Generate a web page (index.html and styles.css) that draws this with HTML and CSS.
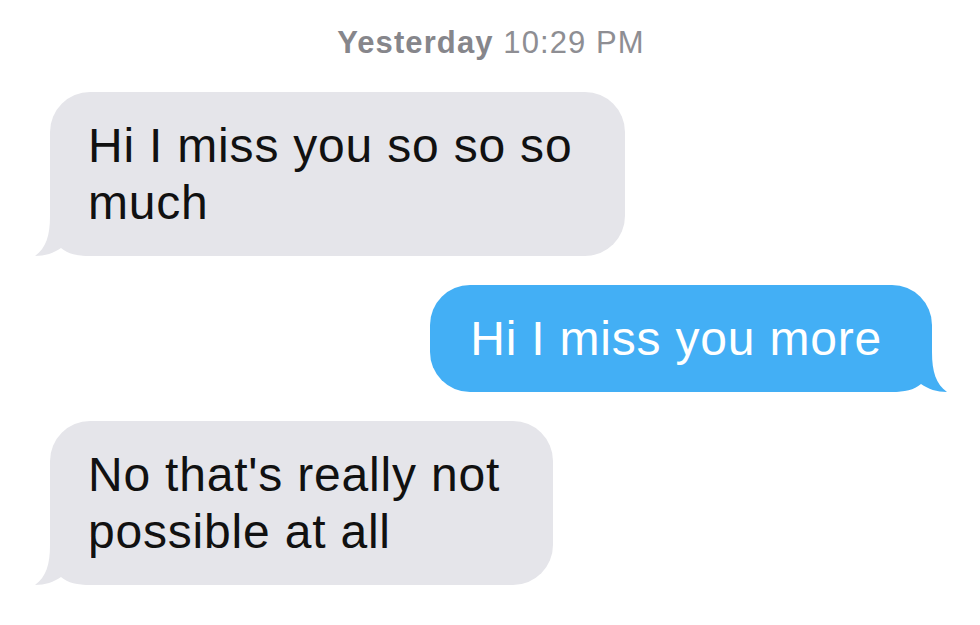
FILE: index.html
```html
<!DOCTYPE html>
<html lang="en">
<head>
<meta charset="UTF-8" />
<meta name="viewport" content="width=device-width, initial-scale=1" />
<title>Messages</title>
<link rel="stylesheet" href="styles.css">
</head>
<body>

<div class="thread">
  <div class="stamp"><strong>Yesterday</strong> 10:29 PM</div>

  <div class="bubble them">
    Hi I miss you so so so<br />much
    <svg class="tail" width="56" height="48" viewBox="0 0 56 48"><path d="M15,0 L15,8 C15,28 11,40 0,48 C10,48 19,45 26,40 C33,46 42,48 56,48 L56,0 Z" /></svg>
  </div>

  <div class="bubble me">
    Hi I miss you more
    <svg class="tail" width="56" height="48" viewBox="0 0 56 48"><path d="M15,0 L15,8 C15,28 11,40 0,48 C10,48 19,45 26,40 C33,46 42,48 56,48 L56,0 Z" /></svg>
  </div>

  <div class="bubble them">
    No that's really not<br />possible at all
    <svg class="tail" width="56" height="48" viewBox="0 0 56 48"><path d="M15,0 L15,8 C15,28 11,40 0,48 C10,48 19,45 26,40 C33,46 42,48 56,48 L56,0 Z" /></svg>
  </div>
</div>

</body>
</html>
```

FILE: styles.css
```css
body {
  margin: 0;
  background: #fff;
  font-family: "Liberation Sans", Arial, sans-serif;
}
.thread {
  display: flex;
  flex-direction: column;
  gap: 29px;
  padding: 23px 48px 0 50px;
}
.stamp {
  text-align: center;
  font-size: 31px;
  line-height: 40px;
  letter-spacing: 1.1px;
  color: #8e8e93;
}
.stamp strong {
  font-weight: 700;
  color: #86868b;
}
.bubble {
  position: relative;
  font-size: 48px;
  line-height: 57px;
  letter-spacing: 0.8px;
  border-radius: 40px;
  padding: 25px 53px 25px 38px;
}
/* grey, left side */
.them {
  align-self: flex-start;
  background: #e5e5ea;
  color: #111;
}
.them .tail {
  position: absolute;
  left: -15px;
  bottom: 0;
  fill: #e5e5ea;
}
/* blue, right side */
.me {
  align-self: flex-end;
  background: #43aff5;
  color: #fff;
  padding: 25px 50px 25px 40px;
}
.me .tail {
  position: absolute;
  right: -15px;
  bottom: 0;
  fill: #43aff5;
  transform: scaleX(-1);
}
```
